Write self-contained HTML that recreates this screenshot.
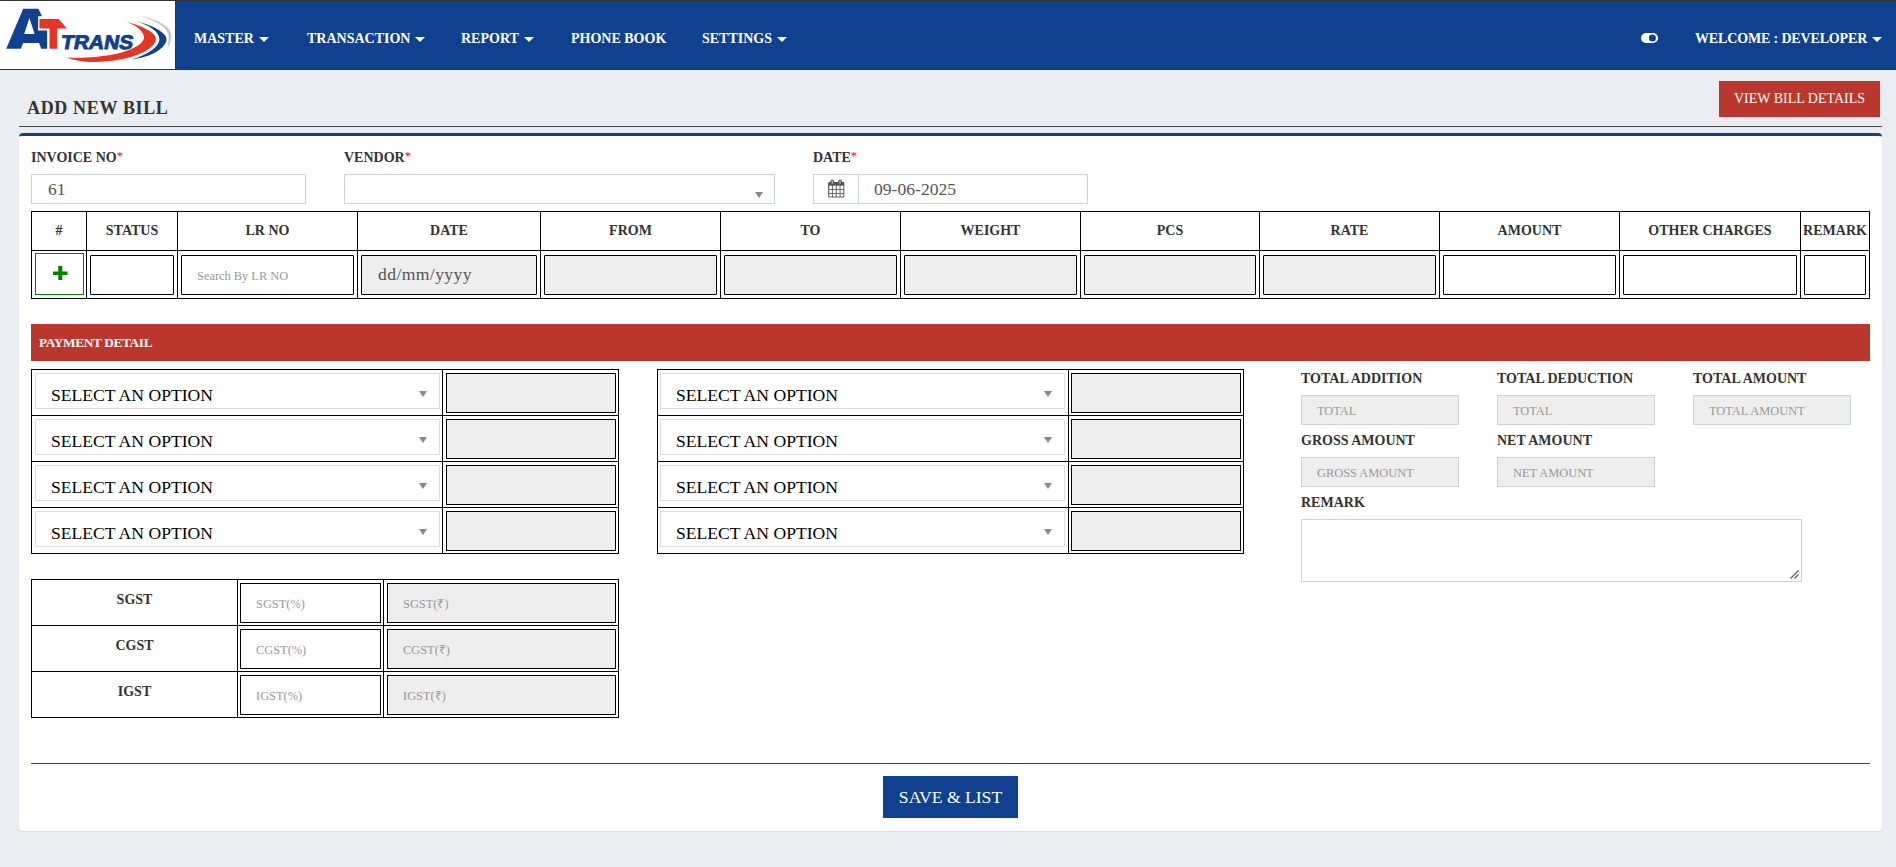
<!DOCTYPE html>
<html><head><meta charset="utf-8">
<style>
*{box-sizing:border-box}
html,body{margin:0;padding:0}
body{width:1896px;height:867px;overflow:hidden;background:#eaedf2;font-family:"Liberation Serif",serif;position:relative;color:#333}
.abs{position:absolute}
#topline{left:0;top:0;width:1896px;height:1px;background:#333}
#nav{left:0;top:1px;width:1896px;height:69px;background:#10418f;border-bottom:1px solid #003b8e}
#logo{left:0;top:1px;width:175px;height:68px;background:#fff}
#logo2{left:175px;top:1px;width:1px;height:68px;background:#003b8e}
.nv{position:absolute;top:29px;color:#fff;font-weight:bold;font-size:14px;line-height:20px;white-space:nowrap}
.caret{display:inline-block;width:0;height:0;border-top:5px solid #fff;border-left:5px solid transparent;border-right:5px solid transparent;vertical-align:middle;margin-left:5px;position:relative;top:0}
#title{left:27px;top:97px;font-size:18px;font-weight:bold;color:#333;line-height:22px;letter-spacing:.65px}
#hr1{left:19px;top:126px;width:1863px;height:1px;background:#444}
#vbd{left:1719px;top:81px;width:161px;height:36px;background:#ba372d;color:#fff;font-size:14px;line-height:36px;text-align:center}
#card{left:19px;top:133px;width:1863px;height:698px;background:#fff;border-top:3px solid #10418f;border-radius:4px;box-shadow:0 1px 1px rgba(0,0,0,.08)}
.lbl{position:absolute;font-weight:bold;font-size:14px;color:#333;line-height:16px;white-space:nowrap}
.lbl i{color:#f00;font-style:normal;font-weight:normal;font-size:12.5px;position:relative;top:-2px}
.inp{position:absolute;height:30px;border:1px solid #cbd2dc;background:#fff}
.dis{background:#eee}
.ph{position:absolute;color:#999;font-size:12.4px;white-space:nowrap}
table{border-collapse:collapse;position:absolute;table-layout:fixed}
td,th{border:1px solid #000;padding:0}

.val{position:absolute;top:5px;color:#555;font-size:17.6px;line-height:18px;white-space:nowrap}
.sarrow{position:absolute;width:0;height:0;border-top:6px solid #888;border-left:4.5px solid transparent;border-right:4.5px solid transparent}
.ph{line-height:14px}
#mt th{height:39px;font-size:14px;font-weight:bold;color:#333;text-align:center;vertical-align:middle;white-space:nowrap}
#mt td{height:48px;position:relative;vertical-align:top}
.plusbox{position:absolute;left:3px;top:2px;width:49px;height:42px;border:1px solid #008000}
.ti{position:absolute;left:3px;top:4px;right:3px;height:40px;border:1px solid #000;border-radius:1px;background:#fff}
.ti.g,.pi.g,.gi.g{background:#eee}
.gt td:nth-child(3) .gi{left:3px}
.pt td{height:46px;position:relative;vertical-align:top}
.pt2 .sel{left:2px;right:3px}
.pt2 .pi{left:2px}
.sel{position:absolute;left:3px;top:3px;right:2px;height:36px;border:1px solid #ddd;background:#fff}
.st{position:absolute;left:15px;top:11px;font-size:17.6px;line-height:20px;color:#000;white-space:nowrap}
.pi{position:absolute;left:3px;top:3px;right:2px;height:40px;border:1px solid #000;background:#eee}
.gt td{height:46px;position:relative;vertical-align:top}
.gl{position:absolute;left:0;right:0;top:12px;text-align:center;font-weight:bold;font-size:14px;color:#333;line-height:16px}
.gi{position:absolute;left:2px;top:3px;right:2px;height:40px;border:1px solid #000;background:#fff}
</style></head>
<body>
<div id="topline" class="abs"></div>
<div id="nav" class="abs"></div>
<div id="logo" class="abs"></div>
<div id="logo2" class="abs"></div>
<svg class="abs" style="left:0;top:0" width="175" height="69" viewBox="0 0 175 69">
<path fill="#10418f" d="M23.2,8.65 L38.4,8.65 L41.9,16.3 L38.1,16.3 L38.1,30.4 L47.1,30.4 L47.1,48.8 L41.2,48.8 L39.1,42.9 L23.2,42.9 L20.8,48.8 L6.2,48.8 Z M29.4,18 L24.2,33.9 L34.6,33.9 Z" fill-rule="evenodd"/>
<path fill="#e43525" d="M39.4,19 L58.8,19 L66.8,28.4 L57.1,28.4 L57.1,48.8 L49.5,48.8 L49.5,28.4 L39.4,28.4 Z"/>
<g transform="translate(60.2,48.9) skewX(-10)"><text x="0" y="0" font-family="Liberation Sans" font-weight="bold" font-size="19.6" fill="#10418f" stroke="#10418f" stroke-width="0.9" textLength="72" lengthAdjust="spacingAndGlyphs">TRANS</text></g>
<path fill="#e43525" d="M126.1,21.8 C146,27 157.5,34 155.8,40.5 C153,50 132,61 95,62 C82,62 73,60 67,57.5 C82,58.3 101,57.2 120,53 C136,48.5 145,42 144,36.5 C142.5,30 135,25 126.1,21.8 Z"/>
<path fill="#10418f" d="M135.8,21.1 C155,26 168,34 166.4,40.5 C164,50 150,57 131.7,59.5 C147,55 159.5,47 159.4,39 C159,32 150,25.5 135.8,21.1 Z"/>
<path fill="#c8c8c8" d="M140.7,16.2 C158,19 172,27 171.3,36 C171,42 169,46 167.7,48.1 C168,44 169,40 168.4,35 C167,28 158,21 140.7,16.2 Z"/>
</svg>
<svg class="abs" style="left:1641px;top:33px" width="17" height="10" viewBox="0 0 17 10"><rect x="0" y="0" width="17" height="10" rx="5" fill="#fff"/><circle cx="11.4" cy="5" r="3.5" fill="#10418f"/></svg>

<div class="nv" style="left:194px">MASTER<span class="caret"></span></div>
<div class="nv" style="left:307px">TRANSACTION<span class="caret"></span></div>
<div class="nv" style="left:461px">REPORT<span class="caret"></span></div>
<div class="nv" style="left:571px">PHONE BOOK</div>
<div class="nv" style="left:702px">SETTINGS<span class="caret"></span></div>
<div class="nv" style="left:1695px;letter-spacing:-.15px">WELCOME : DEVELOPER<span class="caret"></span></div>

<div id="title" class="abs">ADD NEW BILL</div>
<div id="vbd" class="abs">VIEW BILL DETAILS</div>
<div id="hr1" class="abs"></div>
<div id="card" class="abs"></div>


<!-- form row -->
<div class="lbl" style="left:31px;top:150px">INVOICE NO<i>*</i></div>
<div class="inp" style="left:31px;top:174px;width:275px"><span class="val" style="left:16px">61</span></div>
<div class="lbl" style="left:344px;top:150px">VENDOR<i>*</i></div>
<div class="inp" style="left:344px;top:174px;width:431px"><span class="sarrow" style="left:409.5px;top:16.5px"></span></div>
<div class="lbl" style="left:813px;top:150px">DATE<i>*</i></div>
<div class="inp" style="left:813px;top:174px;width:275px">
  <div class="abs" style="left:44px;top:0;width:1px;height:28px;background:#cbd2dc"></div>
  <svg class="abs" style="left:13px;top:4px" width="18" height="20" viewBox="0 0 18 20"><rect x="1.1" y="3" width="16.2" height="15.6" rx="1" fill="#555"/><g fill="#fff"><rect x="2.2" y="6.7" width="2.7" height="3.4"/><rect x="5.8" y="6.7" width="3.0" height="3.4"/><rect x="9.7" y="6.7" width="2.9" height="3.4"/><rect x="13.5" y="6.7" width="2.8" height="3.4"/><rect x="2.2" y="10.9" width="2.7" height="3.1"/><rect x="5.8" y="10.9" width="3.0" height="3.1"/><rect x="9.7" y="10.9" width="2.9" height="3.1"/><rect x="13.5" y="10.9" width="2.8" height="3.1"/><rect x="2.2" y="14.8" width="2.7" height="2.8"/><rect x="5.8" y="14.8" width="3.0" height="2.8"/><rect x="9.7" y="14.8" width="2.9" height="2.8"/><rect x="13.5" y="14.8" width="2.8" height="2.8"/></g><rect x="3.4" y="0.4" width="3.7" height="5" rx="1.6" fill="#555"/><rect x="4.7" y="1.4" width="1.1" height="3.2" fill="#d8d8d8"/><rect x="11.2" y="0.4" width="3.7" height="5" rx="1.6" fill="#555"/><rect x="12.5" y="1.4" width="1.1" height="3.2" fill="#d8d8d8"/></svg>
  <span class="val" style="left:60px">09-06-2025</span>
</div>

<!-- main table -->
<table id="mt" style="left:31px;top:211px;width:1839px">
<colgroup><col style="width:55px"><col style="width:91px"><col style="width:180px"><col style="width:183px"><col style="width:180px"><col style="width:180px"><col style="width:180px"><col style="width:179px"><col style="width:180px"><col style="width:180px"><col style="width:181px"><col style="width:69px"></colgroup>
<tr class="hd"><th>#</th><th>STATUS</th><th>LR NO</th><th>DATE</th><th>FROM</th><th>TO</th><th>WEIGHT</th><th>PCS</th><th>RATE</th><th>AMOUNT</th><th>OTHER CHARGES</th><th>REMARK</th></tr>
<tr class="bd">
<td><div class="plusbox"><svg width="15" height="15" viewBox="0 0 15 15" style="position:absolute;left:16.5px;top:12px"><rect x="0" y="5.5" width="14.5" height="3.5" fill="#008000"/><rect x="5.3" y="0" width="4" height="14" fill="#008000"/></svg></div></td>
<td><div class="ti"></div></td>
<td><div class="ti"><span class="ph" style="left:15px;top:13px">Search By LR NO</span></div></td>
<td><div class="ti g"><span class="val" style="left:16px;top:9px;letter-spacing:.4px">dd/mm/yyyy</span></div></td>
<td><div class="ti g"></div></td>
<td><div class="ti g"></div></td>
<td><div class="ti g"></div></td>
<td><div class="ti g"></div></td>
<td><div class="ti g"></div></td>
<td><div class="ti"></div></td>
<td><div class="ti"></div></td>
<td><div class="ti"></div></td>
</tr>
</table>

<!-- payment bar -->
<div class="abs" style="left:31px;top:324px;width:1839px;height:37px;background:#ba372d"></div>
<div class="abs" style="left:39px;top:335px;color:#fff;font-weight:bold;font-size:13.3px;line-height:16px;letter-spacing:-.35px">PAYMENT DETAIL</div>
<table class="pt" style="left:31px;top:369px;width:588px"><colgroup><col style="width:411px"><col style="width:176px"></colgroup><tr><td><div class="sel"><span class="st">SELECT AN OPTION</span><span class="sarrow" style="right:12.5px;top:17px"></span></div></td><td><div class="pi"></div></td></tr>
<tr><td><div class="sel"><span class="st">SELECT AN OPTION</span><span class="sarrow" style="right:12.5px;top:17px"></span></div></td><td><div class="pi"></div></td></tr>
<tr><td><div class="sel"><span class="st">SELECT AN OPTION</span><span class="sarrow" style="right:12.5px;top:17px"></span></div></td><td><div class="pi"></div></td></tr>
<tr><td><div class="sel"><span class="st">SELECT AN OPTION</span><span class="sarrow" style="right:12.5px;top:17px"></span></div></td><td><div class="pi"></div></td></tr>
</table>
<table class="pt pt2" style="left:657px;top:369px;width:587px"><colgroup><col style="width:411px"><col style="width:175px"></colgroup><tr><td><div class="sel"><span class="st">SELECT AN OPTION</span><span class="sarrow" style="right:12.5px;top:17px"></span></div></td><td><div class="pi"></div></td></tr>
<tr><td><div class="sel"><span class="st">SELECT AN OPTION</span><span class="sarrow" style="right:12.5px;top:17px"></span></div></td><td><div class="pi"></div></td></tr>
<tr><td><div class="sel"><span class="st">SELECT AN OPTION</span><span class="sarrow" style="right:12.5px;top:17px"></span></div></td><td><div class="pi"></div></td></tr>
<tr><td><div class="sel"><span class="st">SELECT AN OPTION</span><span class="sarrow" style="right:12.5px;top:17px"></span></div></td><td><div class="pi"></div></td></tr>
</table>

<!-- totals -->
<div class="lbl" style="left:1301px;top:371px">TOTAL ADDITION</div>
<div class="inp dis" style="left:1301px;top:395px;width:158px"><span class="ph" style="left:15px;top:8px">TOTAL</span></div>
<div class="lbl" style="left:1497px;top:371px">TOTAL DEDUCTION</div>
<div class="inp dis" style="left:1497px;top:395px;width:158px"><span class="ph" style="left:15px;top:8px">TOTAL</span></div>
<div class="lbl" style="left:1693px;top:371px">TOTAL AMOUNT</div>
<div class="inp dis" style="left:1693px;top:395px;width:158px"><span class="ph" style="left:15px;top:8px">TOTAL AMOUNT</span></div>
<div class="lbl" style="left:1301px;top:433px">GROSS AMOUNT</div>
<div class="inp dis" style="left:1301px;top:457px;width:158px"><span class="ph" style="left:15px;top:8px">GROSS AMOUNT</span></div>
<div class="lbl" style="left:1497px;top:433px">NET AMOUNT</div>
<div class="inp dis" style="left:1497px;top:457px;width:158px"><span class="ph" style="left:15px;top:8px">NET AMOUNT</span></div>
<div class="lbl" style="left:1301px;top:495px">REMARK</div>
<div class="inp" style="left:1301px;top:519px;width:501px;height:63px">
<svg class="abs" style="right:2px;bottom:2px" width="9" height="9" viewBox="0 0 9 9"><path d="M8.5 0.5 L0.5 8.5 M8.5 4.5 L4.5 8.5" stroke="#555" stroke-width="1.1"/></svg></div>

<!-- gst table -->
<table class="gt" style="left:31px;top:579px;width:588px">
<colgroup><col style="width:206px"><col style="width:146px"><col style="width:235px"></colgroup>
<tr><td><div class="gl">SGST</div></td><td><div class="gi"><span class="ph" style="left:15px;top:13px">SGST(%)</span></div></td><td><div class="gi g"><span class="ph" style="left:15px;top:13px">SGST(₹)</span></div></td></tr>
<tr><td><div class="gl">CGST</div></td><td><div class="gi"><span class="ph" style="left:15px;top:13px">CGST(%)</span></div></td><td><div class="gi g"><span class="ph" style="left:15px;top:13px">CGST(₹)</span></div></td></tr>
<tr><td><div class="gl">IGST</div></td><td><div class="gi"><span class="ph" style="left:15px;top:13px">IGST(%)</span></div></td><td><div class="gi g"><span class="ph" style="left:15px;top:13px">IGST(₹)</span></div></td></tr>
</table>

<div class="abs" style="left:31px;top:763px;width:1839px;height:1px;background:#444"></div>
<div class="abs" style="left:883px;top:776px;width:135px;height:42px;background:#10418f;color:#fff;font-size:17.6px;line-height:42px;text-align:center">SAVE &amp; LIST</div>
</body></html>
